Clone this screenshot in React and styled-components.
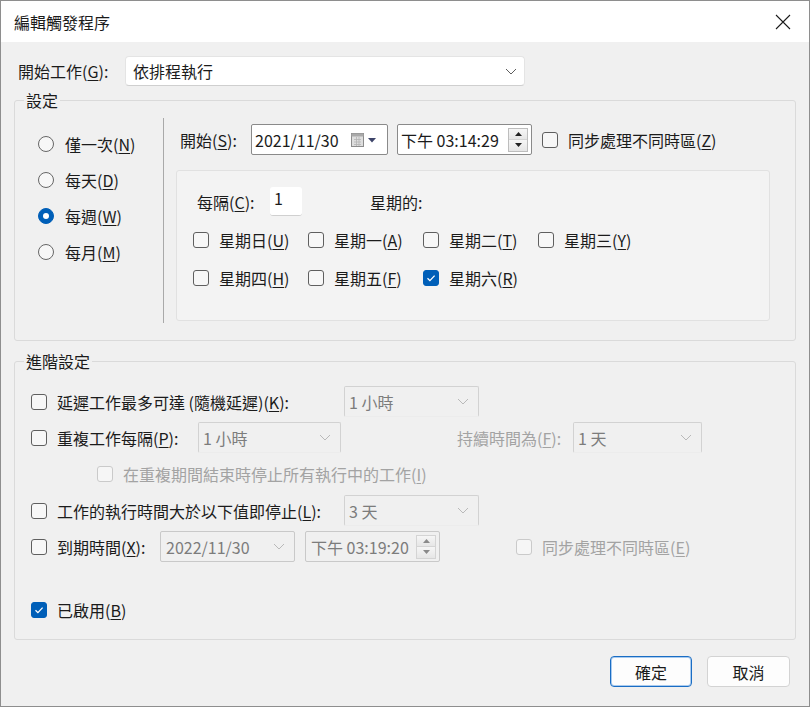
import React from "react";
import styled, { createGlobalStyle } from "styled-components";

const GlobalStyle = createGlobalStyle`
  html, body {
    margin: 0;
    padding: 0;
    background: #f0f0f0;
  }
  body {
    font-family: "Noto Sans CJK TC", "Noto Sans", sans-serif;
    font-size: 16px;
    line-height: 20px;
    color: #1b1b1b;
  }
  * {
    box-sizing: border-box;
  }
`;

const Window = styled.div`
  width: 810px;
  height: 707px;
  border: 1px solid #8e8e8e;
  background: #f0f0f0;
  display: flex;
  flex-direction: column;
  overflow: hidden;
`;

const TitleBar = styled.div`
  height: 41px;
  flex: none;
  background: #fff;
  display: flex;
  align-items: center;
  justify-content: space-between;
  padding: 0 18px 0 13px;
`;

const Body = styled.div`
  flex: 1;
  display: flex;
  flex-direction: column;
  padding: 14px 13px 0 13px;
`;

const Row = styled.div`
  display: flex;
  align-items: center;
  height: ${p => p.$h || 31}px;
  padding-left: ${p => p.$pad || 0}px;
  margin-top: ${p => p.$top || 0}px;
  flex: none;
`;

const Text = styled.span`
  flex: none;
  white-space: nowrap;
  width: ${p => (p.$w ? `${p.$w}px` : "auto")};
  margin-left: ${p => p.$ml || 0}px;
  color: ${p => (p.$muted ? "#a3a3a3" : "#1b1b1b")};
`;

const Key = styled.u`
  text-decoration: underline;
  text-underline-offset: 2px;
  text-decoration-thickness: 1px;
`;

const Select = styled.div`
  flex: none;
  width: ${p => p.$w}px;
  height: ${p => p.$h || 31}px;
  display: flex;
  align-items: center;
  justify-content: space-between;
  padding: 0 ${p => (p.$disabled ? 9 : 7)}px 0 ${p => (p.$disabled ? 4 : 7)}px;
  background: ${p => (p.$disabled ? "#f0f0f0" : "#fff")};
  color: ${p => (p.$disabled ? "#7c7c7c" : "#1b1b1b")};
  border: 1px solid ${p => (p.$disabled ? "#d2d2d2" : "#e4e4e4")};
  border-bottom-color: ${p => (p.$disabled ? "#ececec" : "#cfcfcf")};
  border-radius: ${p => (p.$disabled ? 2 : 4)}px;
`;

const Picker = styled.div`
  flex: none;
  width: ${p => p.$w}px;
  height: 31px;
  margin-left: ${p => p.$ml || 0}px;
  display: flex;
  align-items: center;
  justify-content: space-between;
  padding: 0 ${p => p.$pr || 3}px 0 ${p => (p.$disabled ? 5 : 3)}px;
  background: ${p => (p.$disabled ? "#f0f0f0" : "#fff")};
  color: ${p => (p.$disabled ? "#7c7c7c" : "#1b1b1b")};
  border: 1px solid ${p => (p.$disabled ? "#c9c9c9" : "#8a8a8a")};
  border-radius: 2px;
`;

const Spinner = styled.div`
  width: 20px;
  height: 24px;
  display: flex;
  flex-direction: column;
  border: 1px solid ${p => (p.$disabled ? "#d4d4d4" : "#bdbdbd")};
`;

const SpinHalf = styled.div`
  flex: 1;
  display: flex;
  align-items: center;
  justify-content: center;
  background: linear-gradient(#f6f6f6, #e6e6e6);
  & + & {
    border-top: 1px solid ${p => (p.$disabled ? "#d4d4d4" : "#bdbdbd")};
  }
`;

const Group = styled.fieldset`
  margin: ${p => p.$top}px 0 0 0;
  padding: 0;
  min-width: 0;
  border: 1px solid #dadada;
  border-radius: 3px;
`;

const GroupTitle = styled.legend`
  margin-left: 9px;
  padding: 0 2px;
  line-height: 18px;
`;

const ScheduleBody = styled.div`
  display: flex;
`;

const FrequencyList = styled.div`
  width: 148px;
  padding: 17px 0 0 23px;
  display: flex;
  flex-direction: column;
`;

const Option = styled.label`
  height: 36px;
  display: flex;
  align-items: center;
  gap: 11px;
`;

const RadioDot = styled.span`
  width: 16px;
  height: 16px;
  border-radius: 50%;
  flex: none;
  display: flex;
  align-items: center;
  justify-content: center;
  border: 1px solid ${p => (p.$on ? "#005fb8" : "#666")};
  background: ${p => (p.$on ? "#005fb8" : "#f7f7f7")};
  &::after {
    content: "";
    display: ${p => (p.$on ? "block" : "none")};
    width: 6px;
    height: 6px;
    border-radius: 50%;
    background: #fff;
  }
`;

const Divider = styled.div`
  width: 1px;
  margin: 9px 0 17px;
  background: #a9a9a9;
`;

const Recurrence = styled.div`
  flex: 1;
  padding: 15px 25px 19px 12px;
`;

const WeekBox = styled.div`
  height: 151px;
  margin-top: 15px;
  padding: 16px 0 0 16px;
  background: #f3f3f3;
  border: 1px solid #e1e1e1;
  border-radius: 3px;
`;

const NumberBox = styled.div`
  width: 32px;
  height: 29px;
  padding: 1px 0 0 4px;
  background: #fff;
  border-bottom: 1px solid #d0d0d0;
  border-radius: 3px;
  flex: none;
`;

const DayGrid = styled.div`
  display: grid;
  grid-template-columns: repeat(4, 115px);
  grid-auto-rows: 30px;
  row-gap: 8px;
  margin-top: 9px;
`;

const Day = styled.label`
  display: flex;
  align-items: center;
`;

const Box = styled.span`
  width: 16px;
  height: 16px;
  flex: none;
  display: flex;
  align-items: center;
  justify-content: center;
  margin-left: ${p => p.$ml || 0}px;
  margin-right: 10px;
  border-radius: 3px;
  border: 1px solid
    ${p => (p.$on ? "#005fb8" : p.$disabled ? "#cacaca" : "#5f5f5f")};
  background: ${p => (p.$on ? "#005fb8" : p.$disabled ? "#f6f6f6" : "#f7f7f7")};
`;

const AdvancedBody = styled.div`
  display: flex;
  flex-direction: column;
  gap: 5px;
  padding: 16px 0 14px 16px;
`;

const ButtonBar = styled.div`
  display: flex;
  justify-content: flex-end;
  gap: 15px;
  margin-top: 16px;
  padding-right: 6px;
`;

const Button = styled.button`
  width: ${p => p.$w}px;
  height: 31px;
  font: inherit;
  color: #1b1b1b;
  background: #fdfdfd;
  border: 1px solid ${p => (p.$primary ? "#1a6dc4" : "#d3d3d3")};
  box-shadow: ${p => (p.$primary ? "inset 0 0 0 1px #a9cbef" : "none")};
  border-radius: 4px;
  padding: 0;
`;

const Chevron = ({ color = "#5d5d5d" }) => (
  <svg width="12" height="7" viewBox="0 0 12 7">
    <polyline points="1,1 6,6 11,1" fill="none" stroke={color} strokeWidth="1" />
  </svg>
);

const CloseIcon = () => (
  <svg width="16" height="16" viewBox="0 0 16 16">
    <path d="M1 1L15 15M15 1L1 15" stroke="#1b1b1b" strokeWidth="1.1" />
  </svg>
);

const CalendarDrop = () => (
  <svg width="28" height="16" viewBox="0 0 28 16">
    <rect x="1.5" y="1.5" width="12" height="13" fill="#dedede" stroke="#8c8c8c" />
    <rect x="1.5" y="1.5" width="12" height="3" fill="#a9a9a9" />
    <path d="M4 7.5h7M4 10h7M4 12.5h7M6.5 5v9M9 5v9" stroke="#b4b4b4" strokeWidth="0.8" />
    <path d="M18 6h8l-4 4.5z" fill="#3d4469" />
  </svg>
);

const Arrow = ({ up, color }) => (
  <svg width="7" height="4" viewBox="0 0 7 4">
    <path d={up ? "M0 4h7L3.5 0z" : "M0 0h7L3.5 4z"} fill={color} />
  </svg>
);

const Spin = ({ disabled }) => {
  const color = disabled ? "#8a8a8a" : "#222";
  return (
    <Spinner $disabled={disabled}>
      <SpinHalf $disabled={disabled}>
        <Arrow up color={color} />
      </SpinHalf>
      <SpinHalf $disabled={disabled}>
        <Arrow color={color} />
      </SpinHalf>
    </Spinner>
  );
};

const Check = ({ on, disabled, ml }) => (
  <Box $on={on} $disabled={disabled} $ml={ml}>
    {on && (
      <svg width="12" height="12" viewBox="0 0 12 12">
        <path d="M2.5 6.2l2.4 2.4L9.6 3.6" fill="none" stroke="#fff" strokeWidth="1.3" />
      </svg>
    )}
  </Box>
);

const frequencies = [
  { text: "僅一次", key: "N" },
  { text: "每天", key: "D" },
  { text: "每週", key: "W", on: true },
  { text: "每月", key: "M" }
];

const days = [
  { text: "星期日", key: "U" },
  { text: "星期一", key: "A" },
  { text: "星期二", key: "T" },
  { text: "星期三", key: "Y" },
  { text: "星期四", key: "H" },
  { text: "星期五", key: "F" },
  { text: "星期六", key: "R", on: true }
];

const Label = ({ text, k, colon, ...rest }) => (
  <Text {...rest}>
    {text}(<Key>{k}</Key>){colon ? ":" : ""}
  </Text>
);

export default function App() {
  return (
    <>
      <GlobalStyle />
      <Window>
        <TitleBar>
          <span>編輯觸發程序</span>
          <CloseIcon />
        </TitleBar>
        <Body>
          <Row $h={30} $pad={4}>
            <Label text="開始工作" k="G" colon $w={107} />
            <Select $w={400} $h={30}>
              <span>依排程執行</span>
              <Chevron />
            </Select>
          </Row>

          <Group $top={5}>
            <GroupTitle>設定</GroupTitle>
            <ScheduleBody>
              <FrequencyList>
                {frequencies.map(f => (
                  <Option key={f.key}>
                    <RadioDot $on={f.on} />
                    <Label text={f.text} k={f.key} />
                  </Option>
                ))}
              </FrequencyList>
              <Divider />
              <Recurrence>
                <Row $pad={4}>
                  <Label text="開始" k="S" colon $w={71} />
                  <Picker $w={137} $pr={9}>
                    <span>2021/11/30</span>
                    <CalendarDrop />
                  </Picker>
                  <Picker $w={135} $ml={9}>
                    <span>下午 03:14:29</span>
                    <Spin />
                  </Picker>
                  <Check ml={10} />
                  <Label text="同步處理不同時區" k="Z" />
                </Row>
                <WeekBox>
                  <Row $h={29} $pad={4}>
                    <Label text="每隔" k="C" colon $w={73} />
                    <NumberBox>1</NumberBox>
                    <Text $ml={68}>星期的:</Text>
                  </Row>
                  <DayGrid>
                    {days.map(d => (
                      <Day key={d.key}>
                        <Check on={d.on} />
                        <Label text={d.text} k={d.key} />
                      </Day>
                    ))}
                  </DayGrid>
                </WeekBox>
              </Recurrence>
            </ScheduleBody>
          </Group>

          <Group $top={11}>
            <GroupTitle>進階設定</GroupTitle>
            <AdvancedBody>
              <Row>
                <Check />
                <Text $w={287}>
                  延遲工作最多可達 (隨機延遲)(<Key>K</Key>):
                </Text>
                <Select $w={135} $disabled>
                  <span>1 小時</span>
                  <Chevron color="#b9b9b9" />
                </Select>
              </Row>
              <Row>
                <Check />
                <Label text="重複工作每隔" k="P" colon $w={141} />
                <Select $w={143} $disabled>
                  <span>1 小時</span>
                  <Chevron color="#b9b9b9" />
                </Select>
                <Label text="持續時間為" k="F" colon $w={116} $ml={116} $muted />
                <Select $w={129} $disabled>
                  <span>1 天</span>
                  <Chevron color="#b9b9b9" />
                </Select>
              </Row>
              <Row $h={32} $pad={66}>
                <Check disabled />
                <Label text="在重複期間結束時停止所有執行中的工作" k="I" $muted />
              </Row>
              <Row>
                <Check />
                <Label text="工作的執行時間大於以下值即停止" k="L" colon $w={287} />
                <Select $w={135} $disabled>
                  <span>3 天</span>
                  <Chevron color="#b9b9b9" />
                </Select>
              </Row>
              <Row>
                <Check />
                <Label text="到期時間" k="X" colon $w={103} />
                <Picker $w={135} $pr={9} $disabled>
                  <span>2022/11/30</span>
                  <Chevron color="#b9b9b9" />
                </Picker>
                <Picker $w={135} $ml={10} $disabled>
                  <span>下午 03:19:20</span>
                  <Spin disabled />
                </Picker>
                <Check disabled ml={76} />
                <Label text="同步處理不同時區" k="E" $muted />
              </Row>
              <Row $top={27}>
                <Check on />
                <Label text="已啟用" k="B" />
              </Row>
            </AdvancedBody>
          </Group>

          <ButtonBar>
            <Button $w={82} $primary>確定</Button>
            <Button $w={83}>取消</Button>
          </ButtonBar>
        </Body>
      </Window>
    </>
  );
}
